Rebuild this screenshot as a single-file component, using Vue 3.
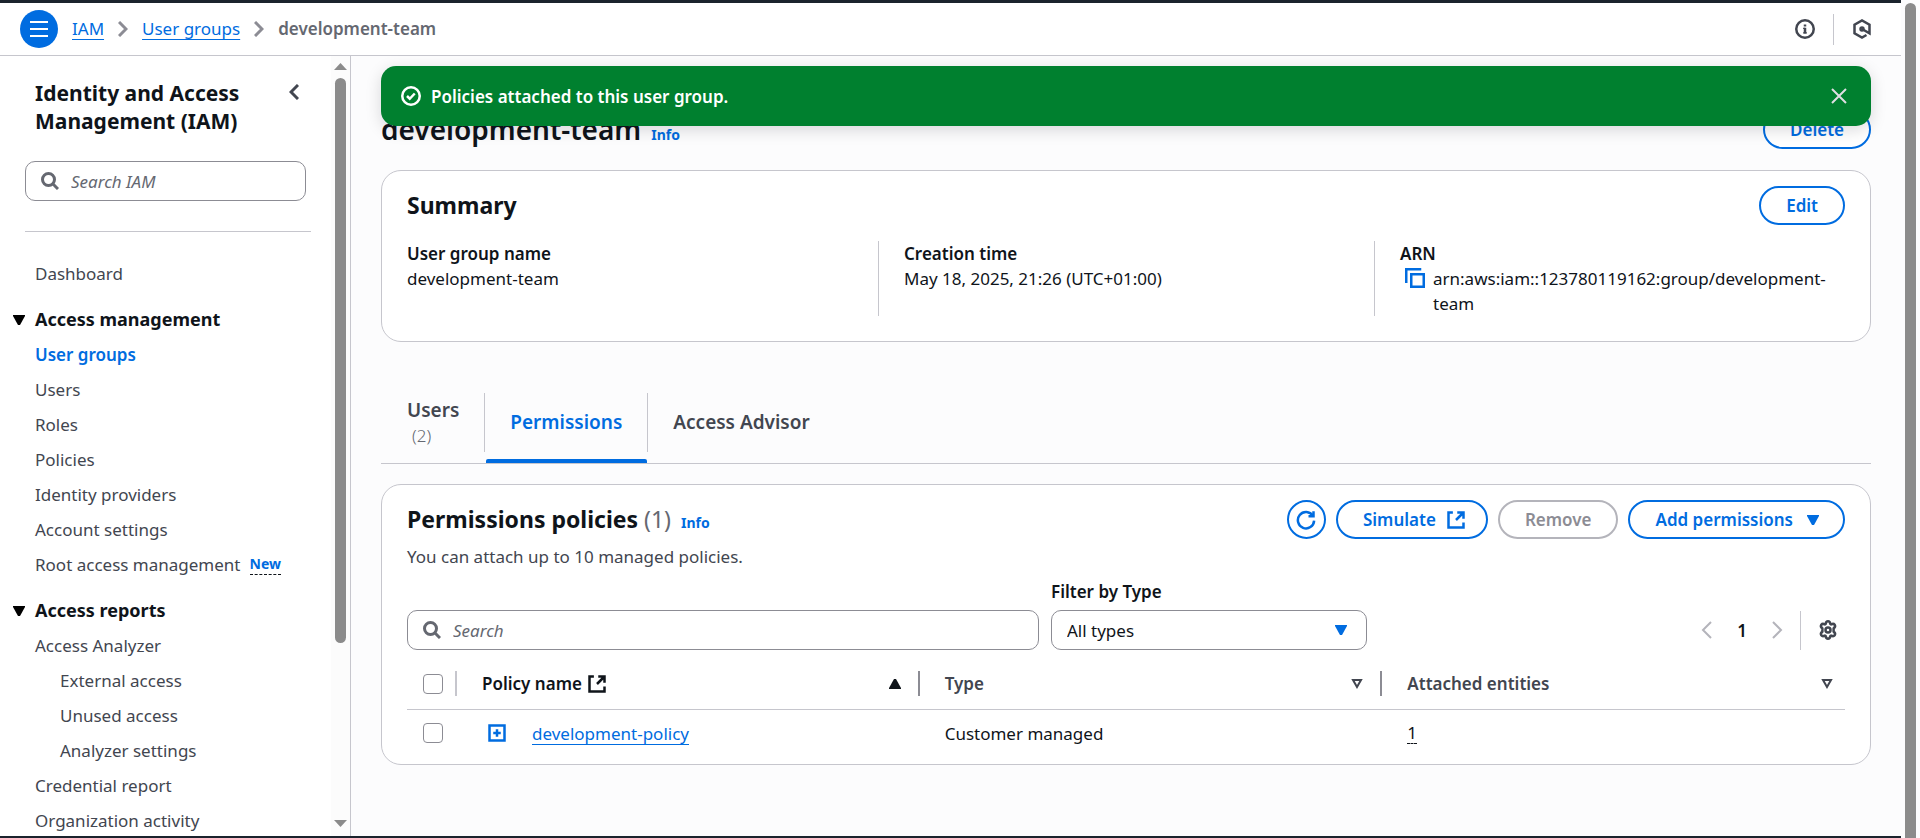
<script setup>
import { ref } from 'vue'

const search = ref('')
const policySearch = ref('')
const typeFilter = ref('All types')

const sections = [
  { items: [{ label: 'Dashboard' }] },
  {
    title: 'Access management',
    items: [
      { label: 'User groups', active: true },
      { label: 'Users' },
      { label: 'Roles' },
      { label: 'Policies' },
      { label: 'Identity providers' },
      { label: 'Account settings' },
      { label: 'Root access management', badge: 'New' }
    ]
  },
  {
    title: 'Access reports',
    items: [
      { label: 'Access Analyzer' },
      { label: 'External access', nested: true },
      { label: 'Unused access', nested: true },
      { label: 'Analyzer settings', nested: true },
      { label: 'Credential report' },
      { label: 'Organization activity' }
    ]
  }
]
</script>

<template>
  <div class="app">
    <div class="page">
      <header class="topbar">
        <button class="menu" type="button" aria-label="Open navigation">
          <svg viewBox="0 0 20 20" width="20" height="20"><path d="M1 3h18M1 10h18M1 17h18" stroke="#fff" stroke-width="2" /></svg>
        </button>
        <nav class="crumbs" aria-label="Breadcrumbs">
          <a href="#">IAM</a>
          <svg class="crumb-sep" viewBox="0 0 10 16" width="10" height="16"><path d="M1 1l7 7-7 7" /></svg>
          <a href="#">User groups</a>
          <svg class="crumb-sep" viewBox="0 0 10 16" width="10" height="16"><path d="M1 1l7 7-7 7" /></svg>
          <strong>development-team</strong>
        </nav>
        <div class="tools">
          <button type="button" class="icon-btn" aria-label="Info panel">
            <svg class="ic" viewBox="0 0 16 16"><circle cx="8" cy="8" r="7" /><path d="M8 11.5V7M8 6V4.3" /><path d="M6.5 7.5H8M6.5 11h3" stroke-width="1" /></svg>
          </button>
          <span class="tool-line"></span>
          <button type="button" class="icon-btn" aria-label="Assistant">
            <svg class="ic" viewBox="0 0 16 16"><path d="M8 8l6 3.4V4.6L8 1.2 2 4.6v6.8l6 3.4 3.6-2" /><circle cx="8" cy="8" r="1.2" /></svg>
          </button>
        </div>
      </header>

      <div class="body">
        <aside class="sidebar">
          <div class="side-inner">
            <div class="side-head">
              <h2>Identity and Access Management (IAM)</h2>
              <button type="button" class="icon-btn collapse" aria-label="Close navigation">
                <svg viewBox="0 0 10 16" width="10" height="16"><path d="M9 1L2 8l7 7" fill="none" stroke="#424650" stroke-width="3" /></svg>
              </button>
            </div>
            <label class="search side-search">
              <svg viewBox="0 0 18 18" width="18" height="18"><circle cx="7.5" cy="7.5" r="6" /><path d="M12 12l5 5" /></svg>
              <input v-model="search" type="text" placeholder="Search IAM" aria-label="Search IAM" />
            </label>
            <hr />
            <nav class="side-nav" aria-label="Identity and Access Management">
              <section v-for="(section, i) in sections" :key="i">
                <button v-if="section.title" type="button" class="section-title">
                  <svg viewBox="0 0 12 10" width="12" height="10"><path d="M0 0h12v1L7 10H5L0 1z" /></svg>
                  <span>{{ section.title }}</span>
                </button>
                <ul>
                  <li v-for="item in section.items" :key="item.label" :class="{ nested: item.nested }">
                    <a href="#" :class="{ active: item.active }">{{ item.label }}</a>
                    <button v-if="item.badge" type="button" class="badge">{{ item.badge }}</button>
                  </li>
                </ul>
              </section>
            </nav>
          </div>
          <div class="side-scroll" aria-hidden="true">
            <svg viewBox="0 0 13 7" width="13" height="7"><path d="M0 7L6.5 0 13 7z" /></svg>
            <div class="side-track"><div class="side-thumb"></div></div>
            <svg viewBox="0 0 13 7" width="13" height="7"><path d="M0 0h13L6.5 7z" /></svg>
          </div>
        </aside>

        <main class="main">
          <div class="flash" role="status">
            <svg class="flash-ic" viewBox="0 0 16 16" width="20" height="20"><circle cx="8" cy="8" r="7" /><path d="M4.8 8l2.2 2.2L11 6" /></svg>
            <span>Policies attached to this user group.</span>
            <button type="button" class="icon-btn flash-close" aria-label="Dismiss">
              <svg viewBox="0 0 16 16" width="16" height="16"><path d="M1 1l14 14M15 1L1 15" /></svg>
            </button>
          </div>

          <div class="title-row">
            <div class="heading">
              <h1>development-team</h1>
              <a href="#" class="info">Info</a>
            </div>
            <button type="button" class="btn">Delete</button>
          </div>

          <section class="card summary">
            <div class="card-head">
              <h2>Summary</h2>
              <button type="button" class="btn">Edit</button>
            </div>
            <dl>
              <div>
                <dt>User group name</dt>
                <dd>development-team</dd>
              </div>
              <div>
                <dt>Creation time</dt>
                <dd>May 18, 2025, 21:26 (UTC+01:00)</dd>
              </div>
              <div>
                <dt>ARN</dt>
                <dd class="arn">
                  <button type="button" class="icon-btn" aria-label="Copy ARN">
                    <svg class="ic blue" viewBox="0 0 16 16"><path d="M15 5H5v10h10z" /><path d="M13 1H1v11" /></svg>
                  </button>
                  <span>arn:aws:iam::123780119162:group/development-team</span>
                </dd>
              </div>
            </dl>
          </section>

          <div class="tabs" role="tablist">
            <button type="button" role="tab" class="tab"><span>Users<small>(2)</small></span></button>
            <button type="button" role="tab" class="tab selected" aria-selected="true"><span>Permissions</span></button>
            <button type="button" role="tab" class="tab"><span>Access Advisor</span></button>
          </div>

          <section class="card policies">
            <div class="card-head">
              <div class="heading">
                <h2>Permissions policies <span class="count">(1)</span></h2>
                <a href="#" class="info">Info</a>
              </div>
              <div class="actions">
                <button type="button" class="btn round" aria-label="Refresh">
                  <svg class="ic blue" viewBox="0 0 16 16"><path d="M10 5h4V1" /><path d="M14.5 8.5A6.5 6.5 0 1 1 13.5 4.7" /></svg>
                </button>
                <button type="button" class="btn with-icon">
                  Simulate
                  <svg class="ic blue" viewBox="0 0 16 16"><path d="M14 10v4H2V2h3.5M9 2h5v5M8 8l6-6" /></svg>
                </button>
                <button type="button" class="btn" disabled>Remove</button>
                <button type="button" class="btn with-icon">
                  Add permissions
                  <svg class="tri" viewBox="0 0 12 10" width="20" height="10"><path d="M0 0h12v1L7 10H5L0 1z" /></svg>
                </button>
              </div>
            </div>
            <p class="desc">You can attach up to 10 managed policies.</p>

            <div class="filters">
              <label class="search">
                <svg viewBox="0 0 18 18" width="18" height="18"><circle cx="7.5" cy="7.5" r="6" /><path d="M12 12l5 5" /></svg>
                <input v-model="policySearch" type="text" placeholder="Search" aria-label="Search policies" />
              </label>
              <div class="type-filter">
                <label for="type">Filter by Type</label>
                <div class="select">
                  <select id="type" v-model="typeFilter">
                    <option>All types</option>
                    <option>Customer managed</option>
                  </select>
                  <svg class="tri" viewBox="0 0 12 10" width="12" height="10"><path d="M0 0h12v1L7 10H5L0 1z" /></svg>
                </div>
              </div>
              <div class="pager">
                <button type="button" class="icon-btn" aria-label="Previous page" disabled>
                  <svg class="page-arrow" viewBox="0 0 12 18" width="12" height="18"><path d="M10 1L2 9l8 8" /></svg>
                </button>
                <strong>1</strong>
                <button type="button" class="icon-btn" aria-label="Next page" disabled>
                  <svg class="page-arrow" viewBox="0 0 12 18" width="12" height="18"><path d="M2 1l8 8-8 8" /></svg>
                </button>
                <span class="pager-line"></span>
                <button type="button" class="icon-btn" aria-label="Preferences">
                  <svg class="ic" viewBox="0 0 16 16"><path d="M6.2 3.1Q6.4 1 8 1t1.8 2.1l.7.4q1.9-.9 2.9.3.9 1.6-.9 2.9v2.6q1.8 1.3.9 2.9-1 1.2-2.9.3l-.7.4Q9.6 15 8 15t-1.8-2.1l-.7-.4q-1.9.9-2.9-.3-.9-1.6.9-2.9V6.7q-1.800-1.300-.9-2.900 1-1.200 2.900-.3z" stroke-linejoin="round" /><circle cx="8" cy="8" r="2" /></svg>
                </button>
              </div>
            </div>

            <table>
              <colgroup><col class="col-check" /><col /><col /><col /></colgroup>
              <thead>
                <tr>
                  <th scope="col"><div class="cell check"><input type="checkbox" aria-label="Select all policies" /><i class="light"></i></div></th>
                  <th scope="col" class="sorted"><div class="cell">Policy name <svg class="ic dark" viewBox="0 0 16 16"><path d="M14 10v4H2V2h3.5M9 2h5v5M8 8l6-6" /></svg><svg class="sort" viewBox="0 0 12 10" width="12" height="10"><path d="M0 10h12V9L7 0H5L0 9z" /></svg><i></i></div></th>
                  <th scope="col"><div class="cell">Type<svg class="sort hollow" viewBox="0 0 12 10" width="12" height="10"><path d="M2 1h8L6 8z" /></svg><i></i></div></th>
                  <th scope="col"><div class="cell">Attached entities<svg class="sort hollow" viewBox="0 0 12 10" width="12" height="10"><path d="M2 1h8L6 8z" /></svg></div></th>
                </tr>
              </thead>
              <tbody>
                <tr>
                  <td><div class="cell check"><input type="checkbox" aria-label="Select development-policy" /></div></td>
                  <td>
                    <div class="cell name">
                      <button type="button" class="icon-btn" aria-label="Expand development-policy"><svg class="ic blue" viewBox="0 0 16 16"><path d="M2 2h12v12H2zM8 5v6M5 8h6" /></svg></button>
                      <a href="#">development-policy</a>
                    </div>
                  </td>
                  <td><div class="cell">Customer managed</div></td>
                  <td><div class="cell"><button type="button" class="entities">1</button></div></td>
                </tr>
              </tbody>
            </table>
          </section>
        </main>
      </div>
    </div>
    <div class="page-scroll" aria-hidden="true"><div class="page-thumb"></div></div>
  </div>
</template>

<style>
html,
body {
  margin: 0;
  overflow: hidden;
}
</style>

<style scoped>
* {
  box-sizing: border-box;
}
.app {
  display: flex;
  height: 100vh;
  overflow: hidden;
  background: #fcfcfd;
  color: #0f141a;
  font-family: "Noto Sans", "Open Sans", sans-serif;
  font-size: 17px;
  line-height: 25px;
}
button,
input,
select {
  font: inherit;
  color: inherit;
}
button {
  padding: 0;
  border: 0;
  background: none;
}
a {
  color: #006ce0;
  text-decoration: none;
}
svg {
  display: block;
  flex: none;
}
h1,
h2,
p,
dl,
dd,
ul {
  margin: 0;
  padding: 0;
}
h1,
strong {
  font-weight: 600;
}
.page {
  flex: 1;
  min-width: 0;
  display: flex;
  flex-direction: column;
  border-top: 3px solid #1b232d;
  border-bottom: 2px solid #1b232d;
}
.page-scroll {
  width: 19px;
  padding: 3px 4px 0;
}
.page-thumb {
  height: 100%;
  border-radius: 6px 6px 0 0;
  background: #8b8b8b;
}
.topbar {
  display: flex;
  align-items: center;
  height: 53px;
  padding: 0 29px 0 20px;
  background: #fff;
  border-bottom: 1px solid #c6c6cd;
}
.menu {
  display: grid;
  place-items: center;
  width: 38px;
  height: 38px;
  border-radius: 50%;
  background: #006ce0;
}
.crumbs {
  display: flex;
  align-items: center;
  gap: 14px;
  margin-left: 14px;
  line-height: 24px;
  padding-bottom: 1px;
}
.crumbs a,
.name a {
  text-decoration: underline;
  text-decoration-thickness: 1px;
  text-underline-offset: 4px;
  text-decoration-skip-ink: none;
}
.crumbs strong {
  color: #656871;
}
.crumb-sep {
  fill: none;
  stroke: #8c8c94;
  stroke-width: 3;
}
.tools {
  display: flex;
  align-items: center;
  gap: 18px;
  margin-left: auto;
}
.tool-line {
  width: 1px;
  height: 31px;
  background: #c6c6cd;
}
.ic {
  width: 20px;
  height: 20px;
  fill: none;
  stroke: #424650;
  stroke-width: 2;
}
.ic.blue {
  stroke: #006ce0;
}
.ic.dark {
  stroke: #0f141a;
}
.body {
  flex: 1;
  min-height: 0;
  display: flex;
}
.sidebar {
  display: flex;
  width: 351px;
  overflow: hidden;
  background: #fff;
  border-right: 1px solid #c6c6cd;
}
.side-inner {
  flex: 1;
  min-width: 0;
  padding: 23px 20px 0 12px;
}
.side-head {
  display: flex;
  align-items: flex-start;
  justify-content: space-between;
  padding: 0 12px 0 23px;
}
.side-head h2 {
  width: 220px;
  font-size: 21px;
  line-height: 28px;
}
.collapse {
  padding-top: 5px;
}
.search {
  display: flex;
  align-items: center;
  gap: 12px;
  height: 40px;
  padding: 0 15px;
  border: 1px solid #8c8c94;
  border-radius: 10px;
  background: #fff;
}
.search svg {
  fill: none;
  stroke: #656871;
  stroke-width: 3;
}
.search input {
  flex: 1;
  min-width: 0;
  padding: 0;
  border: 0;
  outline: 0;
  background: none;
}
.search input::placeholder {
  color: #656871;
  font-style: italic;
  opacity: 1;
}
.side-search {
  margin: 26px 5px 0 13px;
}
hr {
  height: 1px;
  margin: 30px 0 0 13px;
  border: 0;
  background: #c6c6cd;
}
.side-nav {
  padding-top: 29px;
}
.side-nav section + section {
  margin-top: 21px;
}
.section-title {
  display: flex;
  align-items: center;
  gap: 10px;
  height: 25px;
  margin-left: 1px;
  font-size: 18px;
  font-weight: 700;
}
.section-title + ul {
  padding-top: 10px;
}
.side-nav ul {
  display: flex;
  flex-direction: column;
  gap: 10px;
  padding-left: 23px;
  list-style: none;
}
.side-nav li {
  display: flex;
  align-items: center;
  gap: 9px;
  height: 25px;
}
.side-nav li.nested {
  padding-left: 25px;
}
.side-nav li a {
  color: #424650;
}
.side-nav li a.active {
  color: #006ce0;
  font-weight: 600;
}
.badge {
  color: #006ce0;
  font-size: 14px;
  font-weight: 700;
  line-height: 20px;
  border-bottom: 1px dashed #0f141a;
}
.side-scroll {
  display: flex;
  flex-direction: column;
  align-items: center;
  gap: 8px;
  width: 19px;
  padding: 7px 0 9px;
  background: #fcfcfc;
}
.side-scroll svg {
  fill: #8b8b8b;
}
.side-track {
  flex: 1;
  width: 11px;
}
.side-thumb {
  height: 77%;
  border-radius: 6px;
  background: #8b8b8b;
}
.main {
  position: relative;
  flex: 1;
  min-width: 0;
  padding: 54px 30px 0;
}
.flash {
  position: absolute;
  z-index: 1;
  top: 10px;
  left: 30px;
  right: 30px;
  display: flex;
  align-items: center;
  gap: 10px;
  height: 60px;
  padding: 0 24px 0 20px;
  border-radius: 15px;
  background: #00802f;
  color: #fff;
  font-weight: 600;
  box-shadow: 0 4px 16px rgba(0, 7, 22, 0.15);
}
.flash svg {
  fill: none;
  stroke: #fff;
  stroke-width: 2;
}
.flash-close {
  margin-left: auto;
}
.flash .flash-close svg {
  stroke: #dedee3;
}
.title-row {
  display: flex;
  align-items: flex-start;
  justify-content: space-between;
  height: 60px;
}
.heading {
  display: flex;
  align-items: baseline;
}
h1 {
  font-size: 28px;
  line-height: 39px;
}
.info {
  margin-left: 10px;
  font-size: 14px;
  font-weight: 700;
}
.btn {
  display: flex;
  align-items: center;
  gap: 10px;
  height: 39px;
  padding: 0 25px;
  border: 2px solid #006ce0;
  border-radius: 20px;
  color: #006ce0;
  background: #fff;
  font-weight: 600;
}
.btn:disabled {
  border-color: #b4b4bb;
  color: #8c8c94;
}
.btn.with-icon {
  padding-right: 20px;
}
.btn.round {
  width: 39px;
  padding: 0;
  justify-content: center;
}
.tri {
  fill: #006ce0;
}
.card {
  border: 1px solid #c6c6cd;
  border-radius: 20px;
  background: #fff;
}
.card-head {
  display: flex;
  align-items: flex-start;
  justify-content: space-between;
  padding: 15px 25px 0;
}
.card h2 {
  font-size: 23px;
  line-height: 39px;
}
.count {
  color: #656871;
  font-weight: 400;
}
dl {
  display: grid;
  grid-template-columns: repeat(3, 1fr);
  padding: 16px 0 25px;
}
dl > div {
  padding: 0 25px;
}
dl > div + div {
  border-left: 1px solid #c6c6cd;
}
dt {
  font-weight: 600;
}
.arn {
  display: flex;
  align-items: flex-start;
  gap: 8px;
  padding-left: 5px;
}
.arn .icon-btn {
  padding-top: 2px;
}
.tabs {
  display: flex;
  align-items: center;
  margin-top: 42px;
  height: 80px;
  border-bottom: 1px solid #c6c6cd;
}
.tab {
  display: flex;
  flex-direction: column;
  height: 100%;
  color: #424650;
  font-size: 19px;
  font-weight: 600;
  text-align: left;
}
.tab span {
  display: flex;
  flex-direction: column;
  justify-content: center;
  height: 59px;
  margin-top: 9px;
  padding: 0 25px;
  border-left: 1px solid #c6c6cd;
}
.tab:first-child span {
  border-color: transparent;
}
.tab small {
  padding-left: 5px;
  color: #656871;
  font-size: 17px;
  font-weight: 300;
}
.tab.selected {
  color: #006ce0;
}
.tab.selected::after {
  content: "";
  height: 4px;
  margin: 7px 0 0 2px;
  border-radius: 2px 2px 0 0;
  background: #006ce0;
}
.policies {
  margin-top: 20px;
}
.actions {
  display: flex;
  gap: 10px;
}
.desc {
  padding: 5px 25px 0;
  color: #424650;
}
.filters {
  display: grid;
  grid-template-columns: 2fr 1fr 466px;
  align-items: end;
  gap: 12px;
  padding: 10px 25px 0;
}
.type-filter label {
  display: block;
  padding-bottom: 6px;
  font-weight: 600;
}
.select {
  display: grid;
  align-items: center;
}
.select select,
.select svg {
  grid-area: 1 / 1;
}
.select select {
  appearance: none;
  width: 100%;
  height: 40px;
  padding: 0 15px;
  border: 1px solid #8c8c94;
  border-radius: 10px;
  background: #fff;
}
.select svg {
  justify-self: end;
  margin-right: 20px;
  pointer-events: none;
}
.pager {
  display: flex;
  align-items: center;
  justify-content: flex-end;
  gap: 24px;
  height: 40px;
  padding-right: 7px;
}
.pager-line {
  width: 1px;
  height: 39px;
  margin: 0 -7px;
  background: #c6c6cd;
}
.page-arrow {
  fill: none;
  stroke: #b4b4bb;
  stroke-width: 2;
}
table {
  width: calc(100% - 50px);
  margin: 9px 25px 7px;
  border-collapse: collapse;
  table-layout: fixed;
}
.col-check {
  width: 50px;
}
th,
td {
  padding: 0;
  font-weight: 400;
  text-align: left;
}
th {
  height: 50px;
  border-bottom: 1px solid #c6c6cd;
  color: #424650;
  font-weight: 600;
}
td {
  height: 48px;
}
th.sorted {
  color: #0f141a;
}
.cell {
  display: flex;
  align-items: center;
  gap: 5px;
  padding-left: 25px;
}
.cell.check {
  padding-left: 16px;
}
.cell input {
  appearance: none;
  width: 20px;
  height: 20px;
  margin: 0;
  border: 1px solid #8c8c94;
  border-radius: 4px;
  background: #fff;
}
.cell i {
  width: 2px;
  height: 25px;
  background: #8c8c94;
}
.cell .light {
  margin-left: auto;
  background: #c6c6cd;
}
.sort {
  margin: 0 12px 0 auto;
  fill: #0f141a;
}
.hollow {
  fill: none;
  stroke: #424650;
  stroke-width: 2;
}
.cell.name {
  gap: 25px;
  padding-left: 30px;
}
.entities {
  border-bottom: 1px dashed #0f141a;
  line-height: 21px;
}
</style>
